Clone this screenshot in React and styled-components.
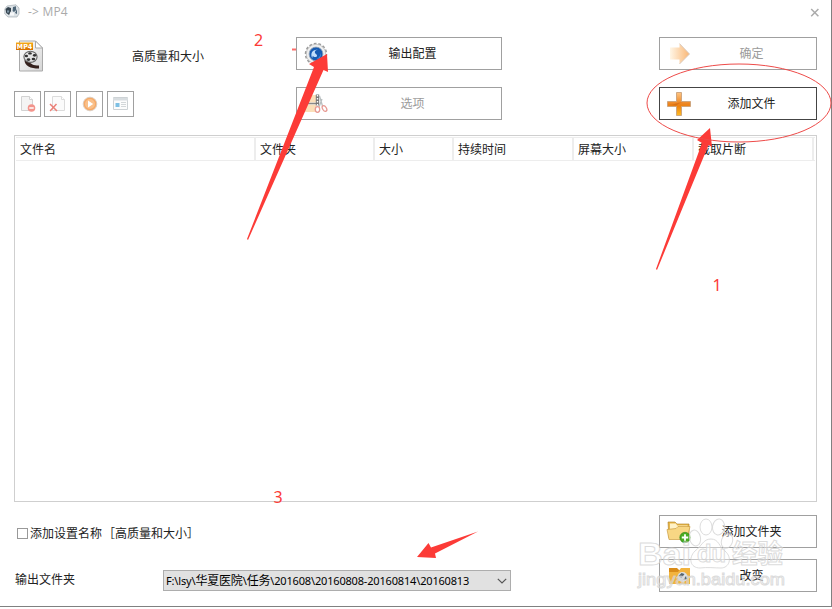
import React, { useState } from 'react'
import styled, { createGlobalStyle } from 'styled-components'

const columns = [
  { label: '文件名', width: 240 },
  { label: '文件夹', width: 119 },
  { label: '大小', width: 79 },
  { label: '持续时间', width: 120 },
  { label: '屏幕大小', width: 120 },
  { label: '截取片断', width: 120 },
]

export default function App() {
  const [isChecked, setChecked] = useState(false)

  return (
    <>
      <GlobalStyle />
      <Window>
        <TitleBar>
          <AppIcon />
          <Title>-&gt; MP4</Title>
          <CloseButton aria-label="close">
            <svg width="10" height="10" viewBox="0 0 10 10">
              <path d="M1.2 1 8.4 8.2M8.4 1 1.2 8.2" stroke="#ababab" strokeWidth="1.5" />
            </svg>
          </CloseButton>
        </TitleBar>

        <TopPanel>
          <Profile>
            <ProfileHead>
              <Mp4Icon />
              <ProfileName>高质量和大小</ProfileName>
            </ProfileHead>
            <Toolbar>
              <ToolButton>
                <RemoveIcon />
              </ToolButton>
              <ToolButton>
                <ClearIcon />
              </ToolButton>
              <ToolButton $gap={5}>
                <PlayIcon />
              </ToolButton>
              <ToolButton $gap={4}>
                <InfoIcon />
              </ToolButton>
            </Toolbar>
          </Profile>
          <ButtonColumn $width={206}>
            <Button>
              <GearIcon />
              <ButtonText>输出配置</ButtonText>
            </Button>
            <Button disabled>
              <ClipIcon />
              <ButtonText>选项</ButtonText>
            </Button>
          </ButtonColumn>
          <ButtonColumn $width={158}>
            <Button disabled>
              <NextIcon />
              <ButtonText>确定</ButtonText>
            </Button>
            <Button $active>
              <PlusIcon />
              <ButtonText>添加文件</ButtonText>
            </Button>
          </ButtonColumn>
        </TopPanel>

        <FileList>
          <ListHeader>
            {columns.map((column) => (
              <HeaderCell key={column.label} $width={column.width}>
                {column.label}
              </HeaderCell>
            ))}
          </ListHeader>
        </FileList>

        <BottomPanel>
          <Settings>
            <CheckLabel>
              <CheckBox
                type="checkbox"
                checked={isChecked}
                onChange={() => setChecked(!isChecked)}
              />
              <span>添加设置名称</span>
              <Bracket>［高质量和大小］</Bracket>
            </CheckLabel>
            <FolderRow>
              <FolderLabel>输出文件夹</FolderLabel>
              <Select>
                <Path>
                  F:\lsy\<Cjk>华夏医院</Cjk>\<Cjk>任务</Cjk>
                  \201608\20160808-20160814\20160813
                </Path>
                <svg width="10" height="6" viewBox="0 0 10 6">
                  <path d="M.8.8 5 5 9.2.8" fill="none" stroke="#555" strokeWidth="1.2" />
                </svg>
              </Select>
            </FolderRow>
          </Settings>
          <FolderButtons>
            <Button>
              <FolderAddIcon />
              <ButtonText>添加文件夹</ButtonText>
            </Button>
            <Button>
              <FolderOpenIcon />
              <ButtonText>改变</ButtonText>
            </Button>
          </FolderButtons>
        </BottomPanel>
      </Window>
      <Edge>
        <svg width="24" height="2" viewBox="0 0 24 2">
          <path d="M1 0h3v2H1zM18 0h2v2h-2z" fill="#d9d9d9" />
          <path d="M8 0h5v2h-3V1H8z" fill="#6c6c6c" />
        </svg>
      </Edge>
      <Watermark />
      <Annotations />
    </>
  )
}

function AppIcon() {
  return (
    <svg width="16" height="15" viewBox="0 0 16 15">
      <path d="M3 2 12 .8l3 3.2v6l-2 3H4L.8 10V5z" fill="#dce2e6" stroke="#a8b0b6" strokeWidth=".7" />
      <path d="M1.5 5 4 3l3 1v3L5 11 2.2 9z" fill="#34434e" />
      <path d="M3 6.4h2.2v2.2H3z" fill="#7e95a5" />
      <path d="m9 3 3-.8v4L10 8l-1.4-1zM11 9l2-4v5z" fill="#4e6577" />
      <path d="M6 8.5h4v3H6z" fill="#f6f8fa" />
    </svg>
  )
}

function Mp4Icon() {
  return (
    <svg width="28" height="33" viewBox="0 0 28 33">
      <defs>
        <linearGradient id="sheet" x1="0" y1="0" x2="1" y2="1">
          <stop offset="0" stopColor="#fff" />
          <stop offset="1" stopColor="#d5d5d5" />
        </linearGradient>
        <linearGradient id="tag" x1="0" y1="0" x2="0" y2="1">
          <stop offset="0" stopColor="#f7ac18" />
          <stop offset="1" stopColor="#d76e00" />
        </linearGradient>
      </defs>
      <path d="M3.5 1h16l7 7v23h-23z" fill="url(#sheet)" stroke="#aaa" />
      <path d="M19.5 1v7h7z" fill="#fff" stroke="#aaa" />
      <path d="M8.500 20c0 6 6 8.500 14.500 8.500v-3c-6 0-8-1.500-10-4z" fill="#35211d" />
      <ellipse cx="14.5" cy="16.800" rx="6.6" ry="5.600" fill="#e4e4e4" stroke="#666" strokeWidth="1.1" />
      <g fill="#303030">
        <ellipse cx="14" cy="13.4" rx="1.8" ry="1.2" />
        <ellipse cx="10.4" cy="16" rx="1.6" ry="1.3" />
        <ellipse cx="18.6" cy="15.3" rx="1.7" ry="1.4" />
        <ellipse cx="12.5" cy="19.6" rx="1.8" ry="1.3" />
        <ellipse cx="17.4" cy="19" rx="1.8" ry="1.3" />
      </g>
      <path d="M0 2.500h17V10H0z" fill="url(#tag)" />
      <text x="8.5" y="9" textAnchor="middle" fontSize="7" fontWeight="700" fill="#fff" fontFamily="DejaVu Sans Condensed, DejaVu Sans, sans-serif">
        MP4
      </text>
    </svg>
  )
}

function RemoveIcon() {
  return (
    <svg width="17" height="18" viewBox="0 0 17 18">
      <path d="M2.5 1.5h8l3 3v11h-11z" fill="#f4f4f4" stroke="#d2d2d2" />
      <path d="M10.5 1.5v3h3" fill="#fff" stroke="#d2d2d2" />
      <circle cx="12.5" cy="13" r="3.8" fill="#f3948c" />
      <path d="M10.3 13h4.4" stroke="#fff" strokeWidth="1.5" />
    </svg>
  )
}

function ClearIcon() {
  return (
    <svg width="17" height="18" viewBox="0 0 17 18">
      <path d="M3.5 1.5h9l3 3v11h-12z" fill="#fbfbfb" stroke="#dcdcdc" />
      <path d="M12.5 1.5v3h3" fill="#fff" stroke="#dcdcdc" />
      <path d="m1 9 7 7M7.5 9l-6.400 7" stroke="#eb8078" strokeWidth="1.5" />
    </svg>
  )
}

function PlayIcon() {
  return (
    <svg width="16" height="16" viewBox="0 0 16 16">
      <circle cx="8" cy="8" r="6.800" fill="#fac08a" stroke="#dccfc4" />
      <circle cx="8" cy="8" r="5.6" fill="none" stroke="#f5a967" strokeWidth="1.2" />
      <path d="m6 4.4 5.2 3.6L6 11.6z" fill="#fff" />
    </svg>
  )
}

function InfoIcon() {
  return (
    <svg width="17" height="14" viewBox="0 0 17 14">
      <path d="M1.500.500h14v12h-14z" fill="#fcfcfc" stroke="#cdd2d5" />
      <path d="M1 1h15v2.5H1z" fill="#d8dde0" />
      <path d="M3.500 6h4v4h-4z" fill="#7ec0e4" />
      <path d="M9 5.500h5M9 7.500h5M9 9.500h5" stroke="#d3d7d9" />
    </svg>
  )
}

function GearIcon() {
  return (
    <svg width="24" height="24" viewBox="0 0 24 24">
      <circle cx="12" cy="12" r="10.3" fill="#eee" stroke="#9b9b9b" strokeWidth="1.9" strokeDasharray="2.7 1.9" />
      <circle cx="12" cy="12" r="9.7" fill="#efefef" stroke="#bcbcbc" strokeWidth=".7" />
      <circle cx="12" cy="12" r="6.900" fill="#165bb3" stroke="#8fa0b4" strokeWidth=".8" />
      <path d="M8.2 16c-2.400-5 .8-9.200 5.800-8.200-3.4.3-3.9 2.900-2 4.300 1.7 1.200 1.200 2.900-.4 3-1.400.1-2.300-.3-2.800-1.300-.2.800-.4 1.500-.6 2.200z" fill="#c0ddfa" />
      <path d="M12.4 17.2c3.5 0 5.2-3.5 4.2-6.2.1 2.8-1.4 4.8-4.2 6.2z" fill="#4899e5" />
    </svg>
  )
}

function ClipIcon() {
  return (
    <svg width="24" height="24" viewBox="0 0 24 24">
      <path d="M1 3h14v7.500H1zM1 12.500h11v7.500H1z" fill="#fbdfb9" />
      <path d="M1 11.500h11" stroke="#888" strokeWidth="1.5" />
      <path d="M13.500 2.500v11" stroke="#777" strokeWidth="3.4" />
      <path d="M13.500 3v11" stroke="#fff" strokeWidth="1.4" strokeDasharray="1.6 1.4" />
      <path d="m15.500 4 3 10M18 7l-3 8" stroke="#b9bfc0" strokeWidth="1.3" />
      <ellipse cx="13.5" cy="17.500" rx="2.2" ry="2.8" fill="none" stroke="#e79a93" strokeWidth="1.3" />
      <ellipse cx="20.5" cy="16.500" rx="1.9" ry="3.1" fill="none" stroke="#e79a93" strokeWidth="1.3" transform="rotate(-32 20.5 16.500)" />
    </svg>
  )
}

function NextIcon() {
  return (
    <svg width="24" height="24" viewBox="0 0 24 24">
      <defs>
        <linearGradient id="next">
          <stop offset="0" stopColor="#fff6e6" />
          <stop offset="1" stopColor="#fab674" />
        </linearGradient>
      </defs>
      <path d="M3 5.500h9.500V1.600L22.500 12l-10 10v-4.500H3z" fill="url(#next)" />
      <path d="M12.5 1.600 22.500 12l-10 10" fill="none" stroke="#d6c8be" strokeWidth=".9" />
    </svg>
  )
}

function PlusIcon() {
  return (
    <svg width="24" height="24" viewBox="0 0 24 24">
      <defs>
        <linearGradient id="plus" x1="0" y1="0" x2="0" y2="1">
          <stop offset="0" stopColor="#ffc583" />
          <stop offset=".5" stopColor="#ec8420" />
          <stop offset=".6" stopColor="#ee8311" />
          <stop offset="1" stopColor="#ffbd24" />
        </linearGradient>
      </defs>
      <path d="M9.5 .500h5v9h9v5h-9v9h-5v-9h-9v-5h9z" fill="url(#plus)" stroke="#c9a27c" strokeWidth=".9" />
      <path d="M2 13c7-.500 8-3 14-2.5-4 .5-6 2.5-7 3z" fill="#cf6412" opacity=".6" />
    </svg>
  )
}

function FolderAddIcon() {
  return (
    <svg width="26" height="24" viewBox="0 0 26 24">
      <path d="M2 2h7l2 2h12v14H3z" fill="#e8b849" stroke="#ad7d24" strokeWidth=".6" />
      <path d="M4 3.500h6l1 2h10.500v5H4z" fill="#fff2c7" />
      <path d="m1 9.500 9-1 2-2h12l-3 13H3z" fill="#f8d784" stroke="#cc9d42" strokeWidth=".7" />
      <circle cx="19" cy="17.500" r="5.200" fill="#49ac22" stroke="#2d7f14" strokeWidth=".6" />
      <path d="M19 14.300v6.400M15.800 17.500h6.400" stroke="#fff" strokeWidth="1.8" />
    </svg>
  )
}

function FolderOpenIcon() {
  return (
    <svg width="26" height="24" viewBox="0 0 26 24">
      <path d="M3 4h8l2 2h11v14H3z" fill="#d98c19" />
      <path d="M3 8h9l3-4h9v16H3z" fill="#f2b33d" />
      <ellipse cx="16.500" cy="13" rx="5" ry="5" fill="#dce1e4" />
      <path d="m12.500 12 3-3 3 1-3 4zM17 16l3-4 1 3z" fill="#56636c" />
    </svg>
  )
}

function Watermark() {
  return (
    <Overlay viewBox="0 0 832 609">
      <g fill="#fff" fillOpacity=".4" stroke="#d0d0d0" strokeWidth="1" strokeOpacity=".75">
        <ellipse cx="695" cy="538" rx="5.5" ry="8" transform="rotate(-12 695 538)" />
        <ellipse cx="706" cy="527" rx="6" ry="8" />
        <ellipse cx="718.500" cy="527" rx="6" ry="8" transform="rotate(8 718.500 527)" />
        <ellipse cx="727" cy="541" rx="5.5" ry="7.500" transform="rotate(20 727 541)" />
        <path d="M711 539c8 0 8 8 14 12 8 7 4 17-4 17-6 0-14-1-21 0-10 0-12-10-5-17 7-5 8-12 16-12z" />
        <g fontFamily="Liberation Sans, Noto Sans CJK SC, sans-serif" fontWeight="700">
          <text x="638" y="565" fontSize="32" textLength="53" lengthAdjust="spacingAndGlyphs">
            Bai
          </text>
          <text x="697" y="562" fontSize="24" textLength="29" lengthAdjust="spacingAndGlyphs">
            du
          </text>
          <text x="732" y="563" fontSize="26" textLength="51" lengthAdjust="spacingAndGlyphs">
            经验
          </text>
          <text x="638" y="585" fontSize="17" fontWeight="400" textLength="147" lengthAdjust="spacingAndGlyphs">
            jingyan.baidu.com
          </text>
        </g>
      </g>
    </Overlay>
  )
}

// hand-drawn marks on top of the window
function Annotations() {
  return (
    <Overlay viewBox="0 0 832 609">
      <g fill="#fc3b37">
        <path d="M327 54 328 72 323.5 70 248 240 247 239 314 67 309 64z" />
        <path d="M710 128 712 147 708.5 145 657 270 656 269 702 143 697 140z" />
        <path d="M417 557 428.500 543 431 547.500 478 531.500 435 553.500 436 558z" />
        <path d="M292 48.500h4v2h-4z" opacity=".75" />
        <g fontFamily="Noto Sans, sans-serif" fontSize="16">
          <text x="254" y="46">2</text>
          <text x="712.500" y="291">1</text>
          <text x="273.500" y="503">3</text>
        </g>
      </g>
      <ellipse cx="739" cy="103" rx="92" ry="39" fill="none" stroke="#ee4b49" />
    </Overlay>
  )
}

const GlobalStyle = createGlobalStyle`
  * {
    box-sizing: border-box;
  }

  body {
    margin: 0;
    overflow: hidden;
    background: #fff;
    color: #222;
    font: 12px/16px 'Noto Sans CJK SC', sans-serif;
  }
`

const Window = styled.div`
  display: flex;
  flex-direction: column;
  width: 832px;
  height: 607px;
  border-right: 1px solid #808080;
  border-bottom: 1px solid #808080;
`

const TitleBar = styled.header`
  display: flex;
  align-items: center;
  height: 25px;
  padding: 0 12px 2px 4px;
`

const Title = styled.span`
  margin-left: 8px;
  padding-top: 1px;
  color: #aaa;
  font: 12px/16px 'Open Sans', sans-serif;
  letter-spacing: 0.2px;
`

const CloseButton = styled.button`
  display: flex;
  margin: 3px -1px 0 auto;
  padding: 0;
  border: 0;
  background: none;
`

const TopPanel = styled.section`
  display: flex;
  padding: 12px 14px 15px;
`

const Profile = styled.div`
  width: 282px;
`

const ProfileHead = styled.div`
  display: flex;
  align-items: center;
  height: 39px;
  padding-left: 2px;
`

const ProfileName = styled.span`
  margin-left: 88px;
  padding-bottom: 2px;
`

const Toolbar = styled.div`
  display: flex;
  margin-top: 15px;
`

const ToolButton = styled.button`
  display: flex;
  align-items: center;
  justify-content: center;
  width: 27px;
  height: 26px;
  margin-left: ${({ $gap }) => $gap || 3}px;
  padding: 0;
  border: 1px solid #a0a0a0;
  background: #fff;

  &:first-child {
    margin-left: 0;
  }
`

const ButtonColumn = styled.div`
  display: flex;
  flex-direction: column;
  gap: 17px;
  width: ${({ $width }) => $width}px;

  &:last-child {
    margin-left: auto;
  }
`

const Button = styled.button`
  display: flex;
  align-items: center;
  width: 100%;
  height: 33px;
  padding: 0 0 0 6px;
  border: 1px solid ${({ $active }) => ($active ? '#444' : '#a0a0a0')};
  background: #fff;
  color: #222;
  font: inherit;

  &:disabled {
    color: #9b9b9b;
  }

  svg {
    flex: none;
    width: 26px;
  }
`

const ButtonText = styled.span`
  flex: 1;
  padding: 0 5px 2px 0;
  text-align: center;
`

const FileList = styled.section`
  width: 803px;
  height: 367px;
  margin-left: 14px;
  padding: 1px;
  border: 1px solid #cfcfcf;
`

const ListHeader = styled.div`
  display: flex;
  height: 24px;
  border-top: 1px solid #ededed;
  border-bottom: 1px solid #ededed;
`

const HeaderCell = styled.div`
  width: ${({ $width }) => $width}px;
  padding: 3px 0 0 4px;
  border-right: 2px solid #ededed;
`

const BottomPanel = styled.section`
  display: flex;
  justify-content: space-between;
  padding: 13px 14px 0;
`

const Settings = styled.div`
  width: 500px;
`

const CheckLabel = styled.label`
  display: flex;
  align-items: center;
  height: 36px;
  padding-left: 3px;
`

const CheckBox = styled.input`
  appearance: none;
  width: 11px;
  height: 11px;
  margin: 0 2px 0 0;
  border: 1px solid #999;
  background: #fff;

  &:checked {
    background: #555;
  }
`

const Bracket = styled.span`
  margin-left: 1px;
`

const FolderRow = styled.div`
  display: flex;
  align-items: center;
  margin-top: 19px;
  padding-left: 1px;
`

const FolderLabel = styled.span`
  width: 148px;
  padding-bottom: 3px;
`

const Select = styled.div`
  display: flex;
  align-items: center;
  justify-content: space-between;
  width: 348px;
  height: 21px;
  padding: 0 3px 0 2px;
  border: 1px solid #adadad;
  background: #e1e1e1;
  color: #000;
`

const Path = styled.span`
  font-family: 'Noto Sans', 'Noto Sans CJK SC', sans-serif;
  font-size: 11px;
  letter-spacing: -0.17px;
  white-space: nowrap;
`

const Cjk = styled.span`
  font-size: 12px;
`

const FolderButtons = styled.div`
  display: flex;
  flex-direction: column;
  gap: 11px;
  width: 158px;
`

const Edge = styled.div`
  height: 2px;
  padding-left: 385px;
  line-height: 0;
`

const Overlay = styled.svg`
  position: absolute;
  top: 0;
  left: 0;
  width: 832px;
  height: 609px;
  pointer-events: none;
`
